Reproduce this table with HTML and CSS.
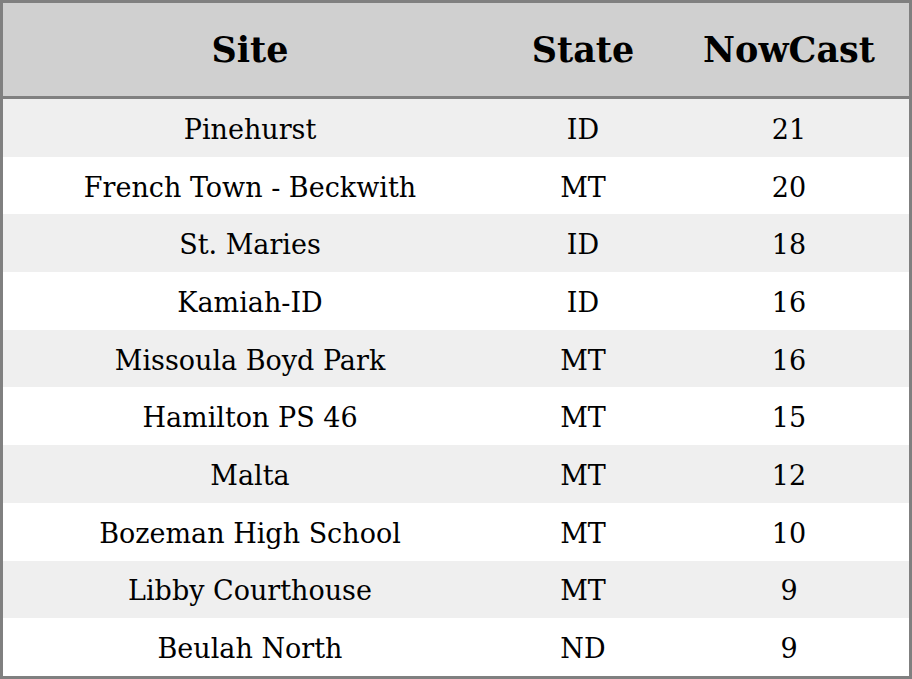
FILE: index.html
```html
<!DOCTYPE html>
<html>
<head>
<meta charset="utf-8">
<link rel="stylesheet" href="styles.css">
</head>
<body>
<table class="aq">
  <colgroup>
    <col class="c-site">
    <col class="c-state">
    <col class="c-now">
  </colgroup>
  <thead>
    <tr><th>Site</th><th>State</th><th>NowCast</th></tr>
  </thead>
  <tbody>
    <tr><td>Pinehurst</td><td>ID</td><td>21</td></tr>
    <tr><td>French Town - Beckwith</td><td>MT</td><td>20</td></tr>
    <tr><td>St. Maries</td><td>ID</td><td>18</td></tr>
    <tr><td>Kamiah-ID</td><td>ID</td><td>16</td></tr>
    <tr><td>Missoula Boyd Park</td><td>MT</td><td>16</td></tr>
    <tr><td>Hamilton PS 46</td><td>MT</td><td>15</td></tr>
    <tr><td>Malta</td><td>MT</td><td>12</td></tr>
    <tr><td>Bozeman High School</td><td>MT</td><td>10</td></tr>
    <tr><td>Libby Courthouse</td><td>MT</td><td>9</td></tr>
    <tr><td>Beulah North</td><td>ND</td><td>9</td></tr>
  </tbody>
</table>
</body>
</html>
```
FILE: styles.css
```css
html, body {
  margin: 0;
  padding: 0;
  background: #ffffff;
}
.aq {
  box-sizing: border-box;
  border-collapse: separate;
  border-spacing: 0;
  width: 912px;
  height: 679px;
  table-layout: fixed;
  border: 3px solid #808080;
  font-family: "DejaVu Serif", serif;
  color: #000;
}
.c-site { width: 494px; }
.c-state { width: 172px; }
.c-now { width: 240px; }
.aq thead tr {
  height: 96px;
}
.aq th {
  background: #d0d0d0;
  font-weight: bold;
  font-size: 35px;
  padding: 0;
  text-align: center;
  vertical-align: middle;
  border-bottom: 3px solid #808080;
}
.aq tbody tr {
  height: 57.7px;
}
.aq td {
  font-size: 27px;
  padding: 3px 0 0 0;
  text-align: center;
  vertical-align: middle;
}
.aq tbody tr:nth-child(odd) td {
  background: #efefef;
}
.aq tbody tr:nth-child(even) td {
  background: #ffffff;
}
```
